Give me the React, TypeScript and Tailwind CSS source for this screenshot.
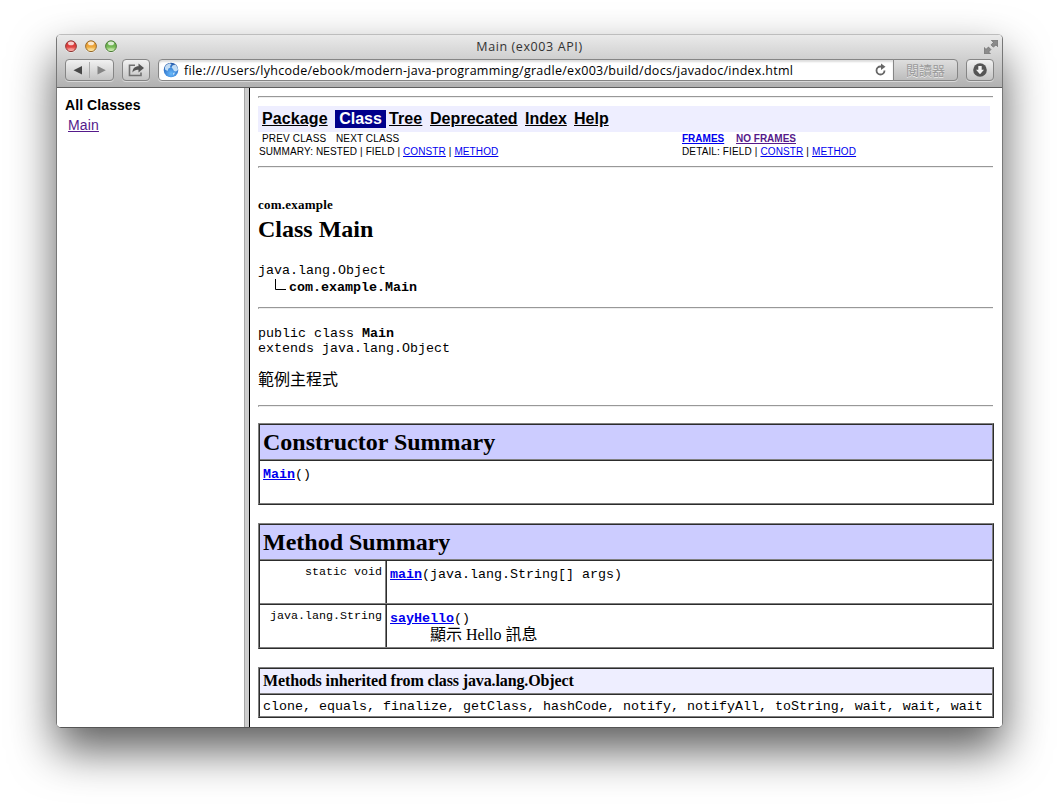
import React from "react";

const Hr = () => <div className="h-[2px] w-[735px] border-t border-l border-[#989898] border-l-[#b0b0b0] bg-[#eeeeee]" />;

const Table = ({ children, className }: { children: React.ReactNode; className: string }) => (
  <div className={"w-[736px] border border-t-[#808080] border-l-[#808080] border-r-[#2c2c2c] border-b-[#2c2c2c] " + className}>
    <div className="border border-t-[#2c2c2c] border-l-[#2c2c2c] border-r-[#808080] border-b-[#808080]">{children}</div>
  </div>
);

const Rule = () => <div className="h-[2px] border-t border-[#808080] bg-[#2c2c2c]" />;

const Link = ({ children, className = "" }: { children: React.ReactNode; className?: string }) => (
  <a className={"text-[#0000ee] underline " + className}>{children}</a>
);

const button =
  "flex h-[22px] items-center justify-center rounded-[4px] border border-[#858585] bg-linear-to-b from-[#f1f1f1] to-[#c4c4c4] shadow-[0_1px_0_#d9d9d9]";

const Light = ({ from, to, ring, id }: { from: string; to: string; ring: string; id: string }) => (
  <svg width="13" height="14" viewBox="0 0 13 14">
    <defs>
      <linearGradient id={id} x1="0" y1="0" x2="0" y2="1">
        <stop offset="0" stopColor={to} />
        <stop offset="0.5" stopColor={to} />
        <stop offset="1" stopColor={from} />
      </linearGradient>
    </defs>
    <circle cx="6" cy="6.8" r="6" fill="#f3f3f3" opacity="0.7" />
    <circle cx="6" cy="6.2" r="5.4" fill={`url(#${id})`} stroke={ring} strokeWidth="1" />
    <ellipse cx="6" cy="3.4" rx="3" ry="1.8" fill="#fff" opacity="0.75" />
    <ellipse cx="6" cy="9.5" rx="3.2" ry="1.5" fill="#fff" opacity="0.25" />
  </svg>
);

function Toolbar() {
  return (
    <header className="h-[53px] border-b border-[#5f5f5f] bg-linear-to-b from-[#eaeaea] to-[#b1b1b1] font-['Open_Sans','Noto_Sans_CJK_TC',sans-serif]">
      <div className="flex h-[24px] items-center pr-[4px] pl-[8px]">
        <div className="flex w-[60px] gap-[7px]">
          <Light id="r" from="#ff9c94" to="#dd3d3c" ring="#8c3735" />
          <Light id="y" from="#ffe58a" to="#eda438" ring="#93672a" />
          <Light id="g" from="#c5ee9d" to="#70b552" ring="#4b7a38" />
        </div>
        <div className="flex-1 pr-[50px] text-center text-[12.5px] leading-[22px] tracking-[0.6px] text-[#333]">Main (ex003 API)</div>
        <svg className="w-[14px]" width="14" height="14" viewBox="0 0 14 14" fill="#8b8b8b" stroke="#707070" strokeWidth="0.8">
          <path d="M7 .5h6.500V7L11.700 5.200 9 7.400 6.800 5.200 9.200 2.600z" transform="translate(.3 -.3)" />
          <path d="M.5 7.300 2.300 9.100 4.800 6.800 7.200 9.200 4.900 11.700 6.700 13.500H.5z" transform="translate(-.3 .3)" />
        </svg>
      </div>
      <div className="flex pl-[8px]">
        <div className={button + " w-[49px]"}>
          <svg width="47" height="20" viewBox="0 0 47 20">
            <path d="M7.500 10.300 16 6v8.600z" fill="#474747" />
            <path d="M23.500 2v16" stroke="#aaa" />
            <path d="M39.800 10.300 31.500 6v8.600z" fill="#858585" />
          </svg>
        </div>
        <div className={button + " ml-[8px] w-[28px]"}>
          <svg width="18" height="16" viewBox="0 0 18 16">
            <path d="M8 3.200H2.500v10.300H14V10.500" fill="none" stroke="#707070" strokeWidth="1.600" />
            <path d="M5.500 10.500C5.500 6.500 8 4.300 11.500 4.300V1.500L17 6l-5.500 4.500V7.700C9 7.500 7 8.200 5.500 10.500z" fill="#555" />
          </svg>
        </div>
        <div className="ml-[8px] flex h-[22px] w-[736px] items-center rounded-l-[4px] border border-[#858585] bg-white pl-[4px] shadow-[inset_0_2px_2px_#dedede,0_1px_0_#d9d9d9]">
          <svg width="16" height="16" viewBox="0 0 16 16">
            <defs>
              <radialGradient id="globe" cx="0.5" cy="0.75" r="0.75">
                <stop offset="0" stopColor="#69b9fa" />
                <stop offset="0.6" stopColor="#3880d4" />
                <stop offset="1" stopColor="#2757a4" />
              </radialGradient>
            </defs>
            <circle cx="8" cy="8" r="7.300" fill="url(#globe)" />
            <path d="M2 5c1-2 3-3.500 5-3.700L8.500 2.500 7 4l.5 1.500-2 1L4.500 9 2 7.500zM9.500 3.500l3-1 2 3 .5 2.500-2 1.500-2-.5-1-2-1.500-1.500zM10 11l2-.5-1.500 3z" fill="#dceefb" opacity="0.85" />
          </svg>
          <span className="ml-[5px] w-[680px] pt-[1px] text-[12.5px] leading-[20px] tracking-[0.28px] whitespace-nowrap text-black">
            file:///Users/lyhcode/ebook/modern-java-programming/gradle/ex003/build/docs/javadoc/index.html
          </span>
          <svg className="ml-[10px]" width="13" height="14" viewBox="0 0 13 14">
            <path d="M8 3.500H6.500a4 4 0 1 0 4 4" fill="none" stroke="#666" strokeWidth="1.800" />
            <path d="M7 .5 11.500 3.700 7 7z" fill="#666" />
          </svg>
        </div>
        <div className="-ml-px flex h-[22px] w-[65px] items-center justify-center rounded-r-[4px] border border-[#858585] bg-linear-to-b from-[#dedede] to-[#bdbdbd] text-[13px] leading-[20px] text-[#999] shadow-[0_1px_0_#d9d9d9] [text-shadow:0_1px_0_#e8e8e8]">
          閱讀器
        </div>
        <div className={button + " ml-[8px] w-[28px]"}>
          <svg width="14" height="14" viewBox="0 0 14 14">
            <circle cx="7" cy="7" r="6.800" fill="#555" />
            <path d="M5.300 3h3.400v3.800H11L7 11.300 3 6.800h2.300z" fill="#f2f2f2" />
          </svg>
        </div>
      </div>
    </header>
  );
}

function NavBar() {
  return (
    <div className="font-['Liberation_Sans',Arial,sans-serif]">
      <div className="flex h-[26px] w-[732px] items-center bg-[#eeeeff] pl-[4px] text-[16px] leading-[18px] font-bold whitespace-nowrap text-black">
        <a className="w-[73px] tracking-[0.1px] underline">Package</a>
        <span className="w-[51px] bg-[#00008b] text-center text-white">Class</span>
        <a className="ml-[3px] w-[41px] tracking-[0.1px] underline">Tree</a>
        <a className="w-[95px] tracking-[0.05px] underline">Deprecated</a>
        <a className="w-[49px] underline">Index</a>
        <a className="underline">Help</a>
      </div>
      <div className="flex h-[13px] text-[10px] leading-[13px] whitespace-pre">
        <span className="w-[78px] pl-[4px] tracking-[0.15px]">PREV CLASS</span>
        <span className="w-[346px] tracking-[0.12px]">NEXT CLASS</span>
        <Link className="w-[54px] font-bold">FRAMES</Link>
        <a className="font-bold text-[#551a8b] underline">NO FRAMES</a>
      </div>
      <div className="flex h-[13px] text-[10px] leading-[13px] tracking-[0.11px] whitespace-nowrap">
        <span className="w-[423px] pl-[1px]">
          SUMMARY: NESTED | FIELD | <Link>CONSTR</Link> | <Link>METHOD</Link>
        </span>
        <span className="pl-[1px] tracking-[0.13px]">
          DETAIL: FIELD | <Link>CONSTR</Link> | <Link>METHOD</Link>
        </span>
      </div>
    </div>
  );
}

const mono = "font-['Liberation_Mono',monospace] text-[13.333px]";

export default function App() {
  return (
    <div className="h-[806px] w-[1059px] overflow-hidden bg-white pt-[34px] pl-[56px]">
      <div className="h-[694px] w-[947px] overflow-hidden rounded-[5px] border border-[#777] border-t-[#bdbdbd] border-b-[#555] shadow-[0_22px_45px_rgba(0,0,0,0.64)]">
        <Toolbar />
        <div className="flex h-[639px] bg-white text-black">
          <aside className="w-[187px] pt-[7px] pl-[8px] font-['Liberation_Sans',Arial,sans-serif] text-[14px]">
            <div className="leading-[20px] font-bold tracking-[0.08px]">All Classes</div>
            <a className="block pl-[3px] leading-[20px] tracking-[0.15px] text-[#551a8b] underline">Main</a>
          </aside>
          <div className="w-[6px] border-r border-l border-r-black border-l-[#a5a5a5] bg-[#cdcdcd]" />
          <main className="flex-1 overflow-hidden pt-[8px] pl-[8px] font-['Liberation_Serif','Noto_Sans_CJK_TC',serif]">
            <Hr />
            <div className="h-[8px]" />
            <NavBar />
            <div className="h-[8px]" />
            <Hr />
            <h2 className="mt-[28px] font-bold">
              <span className="block text-[13px] leading-[18px] tracking-[0.22px]">com.example</span>
              <span className="block text-[24px] leading-[30px]">Class Main</span>
            </h2>
            <div className={"mt-[18px] " + mono}>
              <div className="h-[17px] leading-[17px]">java.lang.Object</div>
              <div className="flex h-[17px] leading-[17px]">
                <svg width="31" height="17" viewBox="0 0 31 17">
                  <path d="M17.500 -1v11.500H28" fill="none" stroke="#000" />
                </svg>
                <b>com.example.Main</b>
              </div>
            </div>
            <div className="h-[11px]" />
            <Hr />
            <div className={"mt-[17px] leading-[15px] " + mono}>
              <div>public class <b>Main</b></div>
              <div>extends java.lang.Object</div>
            </div>
            <div className="mt-[14px] h-[20px] text-[16px] leading-[20px]">範例主程式</div>
            <div className="h-[15px]" />
            <Hr />
            <Table className="mt-[16px]">
              <h3 className="h-[34px] bg-[#ccccff] pl-[3px] text-[24px] leading-[34px] font-bold">Constructor Summary</h3>
              <Rule />
              <div className={"h-[42px] pt-[5px] pl-[3px] leading-[17px] " + mono}>
                <Link className="font-bold">Main</Link>()
              </div>
            </Table>
            <Table className="mt-[18px]">
              <h3 className="h-[34px] bg-[#ccccff] pl-[3px] text-[24px] leading-[34px] font-bold">Method Summary</h3>
              <Rule />
              <div className="flex h-[42px]">
                <div className="w-[125px] pt-[3px] pr-[3px] text-right font-['Liberation_Mono',monospace] text-[11.667px] leading-[17px]">static void</div>
                <div className={"flex-1 border-l border-[#808080] pt-[5px] pl-[4px] leading-[17px] shadow-[inset_1px_0_0_#2c2c2c] " + mono}>
                  <Link className="font-bold">main</Link>(java.lang.String[] args)
                </div>
              </div>
              <Rule />
              <div className="flex h-[42px]">
                <div className="w-[125px] pt-[3px] pr-[3px] text-right font-['Liberation_Mono',monospace] text-[11.667px] leading-[17px]">java.lang.String</div>
                <div className="flex-1 border-l border-[#808080] pt-[5px] pl-[4px] shadow-[inset_1px_0_0_#2c2c2c]">
                  <div className={"h-[16px] leading-[17px] " + mono}>
                    <Link className="font-bold">sayHello</Link>()
                  </div>
                  <div className="h-[18px] pl-[40px] text-[16px] leading-[18px]">顯示 Hello 訊息</div>
                </div>
              </div>
            </Table>
            <Table className="mt-[18px]">
              <h4 className="h-[24px] bg-[#eeeeff] pl-[3px] text-[16px] leading-[24px] font-bold tracking-[-0.12px]">Methods inherited from class java.lang.Object</h4>
              <Rule />
              <div className={"h-[21px] pl-[3px] leading-[23px] whitespace-nowrap " + mono}>
                clone, equals, finalize, getClass, hashCode, notify, notifyAll, toString, wait, wait, wait
              </div>
            </Table>
          </main>
        </div>
      </div>
    </div>
  );
}
